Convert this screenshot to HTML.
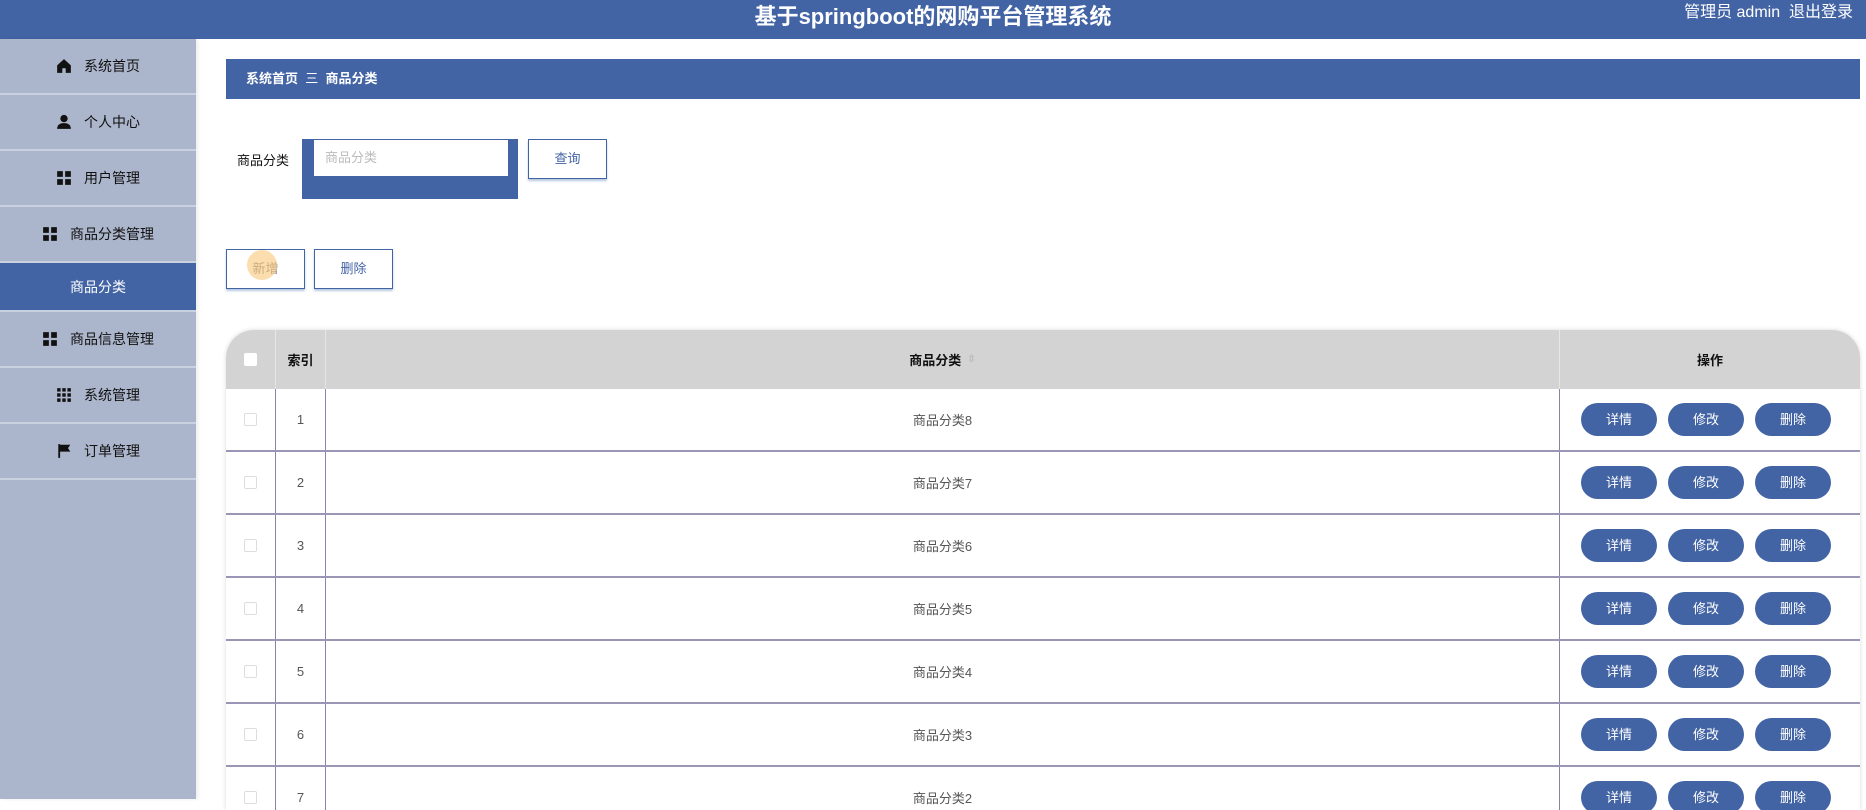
<!DOCTYPE html>
<html><head><meta charset="utf-8"><style>
*{margin:0;padding:0;box-sizing:border-box}
body{width:1866px;height:799px;overflow:hidden;background:#fff;font-family:"Liberation Sans","Noto Sans CJK SC",sans-serif;position:relative}
.hd{position:absolute;left:0;top:0;width:1866px;height:39px;background:#4364a4;color:#fff}
.hd .t{position:absolute;left:0;right:0;top:4px;text-align:center;font-size:22px;line-height:26px;font-weight:bold}
.hd .r{position:absolute;right:13px;top:3px;font-size:16px;line-height:20px}
.sb{position:absolute;left:0;top:39px;width:196px;height:760px;background:#abb5cb;box-shadow:2px 0 4px rgba(0,0,0,.08)}
.it{height:56px;border-bottom:2px solid #c9d0df;display:flex;align-items:center;justify-content:center;font-size:14px;color:#111}
.it.a{height:49px;background:#4364a4;color:#fff;border-bottom:2px solid #c9d0df}
.ic{width:16px;height:16px;margin-right:12px;display:inline-block}
.bc{position:absolute;left:226px;top:59px;width:1634px;height:40px;background:#4364a4;color:#fff;font-size:13px;font-weight:bold;line-height:40px;padding-left:20px}
.lbl{position:absolute;left:237px;top:150px;font-size:13px;color:#111}
.sbox{position:absolute;left:302px;top:139px;width:216px;height:60px;background:#4364a4}
.inp{position:absolute;left:314px;top:140px;width:194px;height:36px;background:#fff;color:#bbb;font-size:13px;line-height:36px;padding-left:11px}
.btn{position:absolute;height:40px;border:1px solid #4364a4;box-shadow:0 2px 2px #b8c8e0;background:#fff;color:#4364a4;font-size:13px;text-align:center;line-height:38px}
.tb{position:absolute;left:226px;top:330px;width:1634px;height:480px;border-radius:28px 28px 0 0;overflow:hidden;box-shadow:0 0 5px rgba(0,0,0,.15)}
.th{height:59px;background:#d3d3d3;display:flex;font-size:13px;font-weight:bold;color:#111}
.c{display:flex;align-items:center;justify-content:center;border-right:1px solid #e6e6e6;flex:none}
.w1{width:50px}.w2{width:50px}.w3{width:1234px}.w4{width:300px;border-right:none}
.row{height:63px;display:flex;border-bottom:2px solid #9a96b6;font-size:13px;color:#555;background:#fff}
.row .c{border-right:1px solid #8883a8}
.row .w4{border-right:none;padding-right:8px}
.cb{width:13px;height:13px;border:1px solid #ddd;border-radius:2px;background:#fff}
.op{width:76px;height:33px;border-radius:17px;background:#4364a4;color:#fff;font-size:13px;line-height:33px;text-align:center;margin:0 5.5px}
</style></head><body>
<div class="hd"><div class="t">基于springboot的网购平台管理系统</div><div class="r">管理员 admin&nbsp;&nbsp;退出登录</div></div>
<div class="sb">
<div class="it"><svg class="ic" viewBox="0 0 14 14"><path d="M7 1L1 6.5V13h4.5V9h3v4H13V6.5z" fill="#111"/></svg>系统首页</div>
<div class="it"><svg class="ic" viewBox="0 0 14 14"><circle cx="7" cy="4" r="3.2" fill="#111"/><path d="M1 13c0-4 3-5 6-5s6 1 6 5z" fill="#111"/></svg>个人中心</div>
<div class="it"><svg class="ic" viewBox="0 0 14 14" fill="#111"><rect x="1" y="1" width="5" height="5"/><rect x="8" y="1" width="5" height="5"/><rect x="1" y="8" width="5" height="5"/><rect x="8" y="8" width="5" height="5"/></svg>用户管理</div>
<div class="it"><svg class="ic" viewBox="0 0 14 14" fill="#111"><rect x="1" y="1" width="5" height="5"/><rect x="8" y="1" width="5" height="5"/><rect x="1" y="8" width="5" height="5"/><rect x="8" y="8" width="5" height="5"/></svg>商品分类管理</div>
<div class="it a">商品分类</div>
<div class="it"><svg class="ic" viewBox="0 0 14 14" fill="#111"><rect x="1" y="1" width="5" height="5"/><rect x="8" y="1" width="5" height="5"/><rect x="1" y="8" width="5" height="5"/><rect x="8" y="8" width="5" height="5"/></svg>商品信息管理</div>
<div class="it"><svg class="ic" viewBox="0 0 14 14" fill="#111"><rect x="1" y="1" width="3" height="3"/><rect x="5.5" y="1" width="3" height="3"/><rect x="10" y="1" width="3" height="3"/><rect x="1" y="5.5" width="3" height="3"/><rect x="5.5" y="5.5" width="3" height="3"/><rect x="10" y="5.5" width="3" height="3"/><rect x="1" y="10" width="3" height="3"/><rect x="5.5" y="10" width="3" height="3"/><rect x="10" y="10" width="3" height="3"/></svg>系统管理</div>
<div class="it"><svg class="ic" viewBox="0 0 14 14" fill="#111"><rect x="2" y="1" width="1.6" height="12"/><path d="M3.5 1.5h9l-2 3 2 3h-9z"/></svg>订单管理</div>
</div>
<div class="bc">系统首页 &nbsp;<span style="font-weight:normal">三</span>&nbsp; 商品分类</div>
<div class="lbl">商品分类</div>
<div class="sbox"></div><div class="inp">商品分类</div>
<div class="btn" style="left:528px;top:139px;width:79px">查询</div>
<div class="btn" style="left:226px;top:249px;width:79px;color:#888">新增</div>
<div style="position:absolute;left:247px;top:250px;width:30px;height:30px;border-radius:50%;background:rgba(250,200,120,.6)"></div>
<div class="btn" style="left:314px;top:249px;width:79px">删除</div>
<div class="tb">
<div class="th"><div class="c w1"><div class="cb" style="border:none"></div></div><div class="c w2">索引</div><div class="c w3">商品分类 <span style="color:#bbb;font-size:10px;margin-left:6px">⇳</span></div><div class="c w4">操作</div></div>
<div class="row"><div class="c w1"><div class="cb"></div></div><div class="c w2">1</div><div class="c w3">商品分类8</div><div class="c w4"><div class="op">详情</div><div class="op">修改</div><div class="op">删除</div></div></div>
<div class="row"><div class="c w1"><div class="cb"></div></div><div class="c w2">2</div><div class="c w3">商品分类7</div><div class="c w4"><div class="op">详情</div><div class="op">修改</div><div class="op">删除</div></div></div>
<div class="row"><div class="c w1"><div class="cb"></div></div><div class="c w2">3</div><div class="c w3">商品分类6</div><div class="c w4"><div class="op">详情</div><div class="op">修改</div><div class="op">删除</div></div></div>
<div class="row"><div class="c w1"><div class="cb"></div></div><div class="c w2">4</div><div class="c w3">商品分类5</div><div class="c w4"><div class="op">详情</div><div class="op">修改</div><div class="op">删除</div></div></div>
<div class="row"><div class="c w1"><div class="cb"></div></div><div class="c w2">5</div><div class="c w3">商品分类4</div><div class="c w4"><div class="op">详情</div><div class="op">修改</div><div class="op">删除</div></div></div>
<div class="row"><div class="c w1"><div class="cb"></div></div><div class="c w2">6</div><div class="c w3">商品分类3</div><div class="c w4"><div class="op">详情</div><div class="op">修改</div><div class="op">删除</div></div></div>
<div class="row"><div class="c w1"><div class="cb"></div></div><div class="c w2">7</div><div class="c w3">商品分类2</div><div class="c w4"><div class="op">详情</div><div class="op">修改</div><div class="op">删除</div></div></div>
</div>
</body></html>
